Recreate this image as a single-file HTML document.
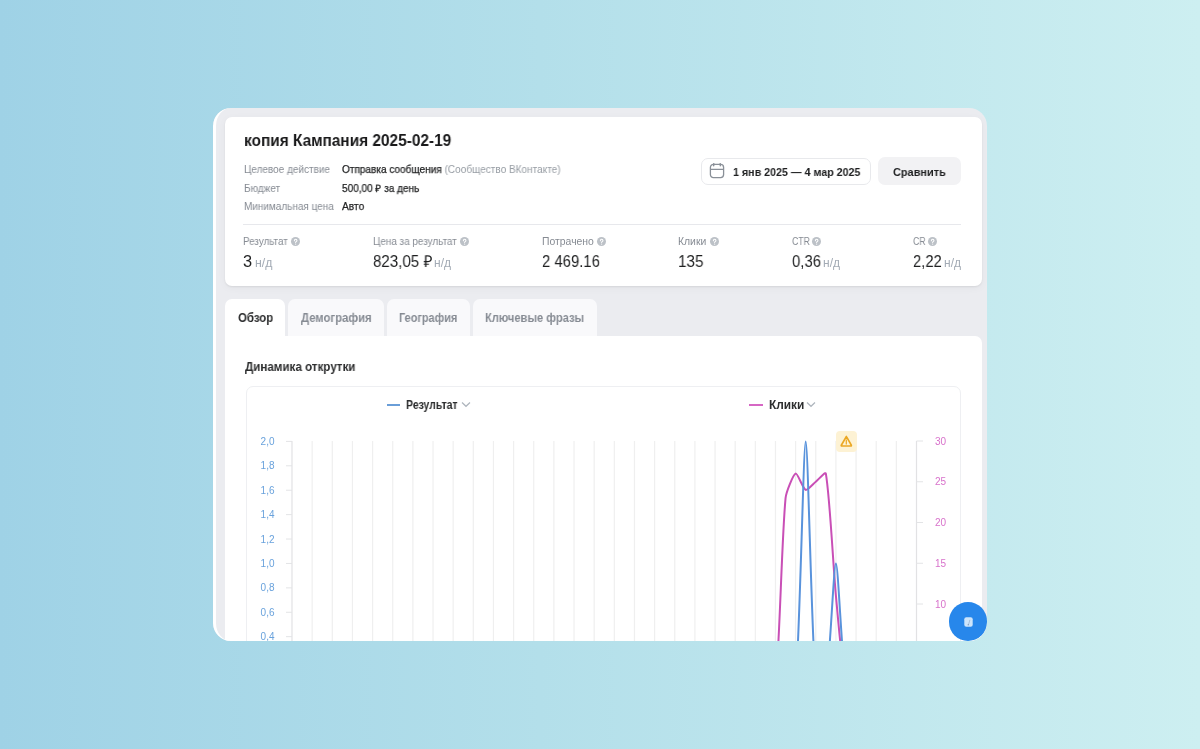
<!DOCTYPE html>
<html><head><meta charset="utf-8">
<style>
html,body{margin:0;padding:0;}
body{width:1200px;height:749px;overflow:hidden;position:relative;
  background:linear-gradient(90deg,#9fd2e6 0%,#b3dfea 45%,#cdeff1 100%);
  font-family:"Liberation Sans",sans-serif;color:#2c2d2e;}
.card{position:absolute;left:213px;top:107.5px;width:774px;height:533.5px;border-radius:18px;overflow:hidden;background:#ebecf0;}
.edge{position:absolute;left:0;top:0;width:774px;height:533.5px;border-radius:18px;box-sizing:border-box;border-left:3.5px solid #fff;}
.pg{position:absolute;left:-213px;top:-107.5px;width:1200px;height:749px;}
.abs{position:absolute;white-space:nowrap;}
.t{position:absolute;white-space:nowrap;transform-origin:0 0;will-change:transform;}
.head{position:absolute;left:225px;top:117px;width:757px;height:169px;background:#fff;border-radius:7px;box-shadow:0 1px 2px rgba(0,0,0,0.07),0 2px 8px rgba(0,0,0,0.04);}
.title{left:245px;top:129px;font-size:15.3px;font-weight:700;line-height:20px;color:#2c2d2e;}
.lbl{font-size:9.9px;line-height:12px;color:#818c99;}
.val{font-size:9.9px;line-height:12px;color:#2c2d2e;}
.muted{color:#99a2ad;}
.datebtn{position:absolute;left:701px;top:157.5px;width:170px;height:27.5px;box-sizing:border-box;border:1px solid #e8e9ec;border-radius:7px;}
.cmpbtn{position:absolute;left:878px;top:157px;width:83px;height:28px;background:#f2f2f4;border-radius:7px;}
.btntxt{font-size:10.7px;font-weight:700;line-height:14px;color:#2c2d2e;}
.divider{position:absolute;left:243px;top:224px;width:718px;height:1px;background:#e7e8ec;}
.mlbl{font-size:9.7px;line-height:12px;color:#818c99;}
.help{position:absolute;width:9px;height:9px;border-radius:50%;background:#bcc1c7;}
.help svg{position:absolute;left:0;top:0;}
.mval{font-size:15px;line-height:18px;color:#2c2d2e;}
.nd{font-size:11.3px;color:#a3abb5;}
.tab{position:absolute;top:298.5px;height:37.5px;border-radius:7px 7px 0 0;background:#f9f9fb;}
.tab.active{background:#fff;}
.tabtxt{font-size:11.2px;font-weight:700;line-height:14px;color:#818c99;}
.panel{position:absolute;left:225px;top:336px;width:757px;height:400px;background:#fff;border-radius:0 7px 0 0;}
.ctitle{left:245.5px;top:358px;font-size:11.5px;font-weight:700;line-height:16px;color:#2c2d2e;}
.cbox{position:absolute;left:245.5px;top:386px;width:715px;height:400px;box-sizing:border-box;border:1px solid #eeeff2;border-radius:7px;}
.chart{position:absolute;left:0;top:0;will-change:transform;}
.leg{font-size:10.6px;font-weight:700;line-height:14px;color:#2c2d2e;}
.warn{position:absolute;left:836px;top:431px;width:20.5px;height:21px;border-radius:4px;background:#fdf2d4;}
.fab{position:absolute;left:948.5px;top:602px;width:38.6px;height:38.6px;border-radius:50%;background:#2787eb;}
</style></head><body>
<div class="card">
<div class="pg">
  <div class="head"></div>

  <div class="datebtn"></div>
  <svg class="abs" style="left:709px;top:162px" width="16" height="17" viewBox="0 0 16 17">
    <rect x="1.4" y="2.4" width="13.2" height="13.2" rx="3" fill="none" stroke="#8a9098" stroke-width="1.3"/>
    <line x1="1.4" y1="7.3" x2="14.6" y2="7.3" stroke="#8a9098" stroke-width="1.3"/>
    <line x1="4.7" y1="1.6" x2="4.7" y2="3.8" stroke="#8a9098" stroke-width="1.4" stroke-linecap="round"/>
    <line x1="11.3" y1="1.6" x2="11.3" y2="3.8" stroke="#8a9098" stroke-width="1.4" stroke-linecap="round"/>
  </svg>
  <div class="cmpbtn"></div>

  <div class="divider"></div>

  <div class="help" style="left:290.95px;top:236.6px"><svg width="9.3" height="9.3" viewBox="0 0 10 10"><path d="M3.6,3.9 Q3.6,2.5 5,2.5 Q6.4,2.5 6.4,3.8 Q6.4,4.6 5.5,5 Q5,5.3 5,6" fill="none" stroke="#fff" stroke-width="1.1" stroke-linecap="round"/><circle cx="5" cy="7.6" r="0.65" fill="#fff"/></svg></div>
<div class="help" style="left:460.10px;top:236.6px"><svg width="9.3" height="9.3" viewBox="0 0 10 10"><path d="M3.6,3.9 Q3.6,2.5 5,2.5 Q6.4,2.5 6.4,3.8 Q6.4,4.6 5.5,5 Q5,5.3 5,6" fill="none" stroke="#fff" stroke-width="1.1" stroke-linecap="round"/><circle cx="5" cy="7.6" r="0.65" fill="#fff"/></svg></div>
<div class="help" style="left:597.10px;top:236.6px"><svg width="9.3" height="9.3" viewBox="0 0 10 10"><path d="M3.6,3.9 Q3.6,2.5 5,2.5 Q6.4,2.5 6.4,3.8 Q6.4,4.6 5.5,5 Q5,5.3 5,6" fill="none" stroke="#fff" stroke-width="1.1" stroke-linecap="round"/><circle cx="5" cy="7.6" r="0.65" fill="#fff"/></svg></div>
<div class="help" style="left:710.20px;top:236.6px"><svg width="9.3" height="9.3" viewBox="0 0 10 10"><path d="M3.6,3.9 Q3.6,2.5 5,2.5 Q6.4,2.5 6.4,3.8 Q6.4,4.6 5.5,5 Q5,5.3 5,6" fill="none" stroke="#fff" stroke-width="1.1" stroke-linecap="round"/><circle cx="5" cy="7.6" r="0.65" fill="#fff"/></svg></div>
<div class="help" style="left:812.45px;top:236.6px"><svg width="9.3" height="9.3" viewBox="0 0 10 10"><path d="M3.6,3.9 Q3.6,2.5 5,2.5 Q6.4,2.5 6.4,3.8 Q6.4,4.6 5.5,5 Q5,5.3 5,6" fill="none" stroke="#fff" stroke-width="1.1" stroke-linecap="round"/><circle cx="5" cy="7.6" r="0.65" fill="#fff"/></svg></div>
<div class="help" style="left:928.25px;top:236.6px"><svg width="9.3" height="9.3" viewBox="0 0 10 10"><path d="M3.6,3.9 Q3.6,2.5 5,2.5 Q6.4,2.5 6.4,3.8 Q6.4,4.6 5.5,5 Q5,5.3 5,6" fill="none" stroke="#fff" stroke-width="1.1" stroke-linecap="round"/><circle cx="5" cy="7.6" r="0.65" fill="#fff"/></svg></div>


  <div class="tab active" style="left:225px;width:59.5px"></div>
  <div class="tab" style="left:287.5px;width:96.5px"></div>
  <div class="tab" style="left:386.5px;width:83.5px"></div>
  <div class="tab" style="left:473px;width:124px"></div>
  <div class="panel"></div>
  <div class="cbox"></div>
  <svg class="chart" width="1200" height="749" viewBox="0 0 1200 749">
<g font-family="Liberation Sans" font-size="10"><line x1="292.00" y1="441" x2="292.00" y2="700" stroke="#e2e2e4" stroke-width="1.2"/><line x1="312.15" y1="441" x2="312.15" y2="700" stroke="#efefef" stroke-width="1.2"/><line x1="332.29" y1="441" x2="332.29" y2="700" stroke="#efefef" stroke-width="1.2"/><line x1="352.44" y1="441" x2="352.44" y2="700" stroke="#efefef" stroke-width="1.2"/><line x1="372.58" y1="441" x2="372.58" y2="700" stroke="#efefef" stroke-width="1.2"/><line x1="392.73" y1="441" x2="392.73" y2="700" stroke="#efefef" stroke-width="1.2"/><line x1="412.87" y1="441" x2="412.87" y2="700" stroke="#efefef" stroke-width="1.2"/><line x1="433.02" y1="441" x2="433.02" y2="700" stroke="#efefef" stroke-width="1.2"/><line x1="453.16" y1="441" x2="453.16" y2="700" stroke="#efefef" stroke-width="1.2"/><line x1="473.31" y1="441" x2="473.31" y2="700" stroke="#efefef" stroke-width="1.2"/><line x1="493.45" y1="441" x2="493.45" y2="700" stroke="#efefef" stroke-width="1.2"/><line x1="513.60" y1="441" x2="513.60" y2="700" stroke="#efefef" stroke-width="1.2"/><line x1="533.74" y1="441" x2="533.74" y2="700" stroke="#efefef" stroke-width="1.2"/><line x1="553.89" y1="441" x2="553.89" y2="700" stroke="#efefef" stroke-width="1.2"/><line x1="574.03" y1="441" x2="574.03" y2="700" stroke="#efefef" stroke-width="1.2"/><line x1="594.18" y1="441" x2="594.18" y2="700" stroke="#efefef" stroke-width="1.2"/><line x1="614.32" y1="441" x2="614.32" y2="700" stroke="#efefef" stroke-width="1.2"/><line x1="634.47" y1="441" x2="634.47" y2="700" stroke="#efefef" stroke-width="1.2"/><line x1="654.61" y1="441" x2="654.61" y2="700" stroke="#efefef" stroke-width="1.2"/><line x1="674.76" y1="441" x2="674.76" y2="700" stroke="#efefef" stroke-width="1.2"/><line x1="694.90" y1="441" x2="694.90" y2="700" stroke="#efefef" stroke-width="1.2"/><line x1="715.05" y1="441" x2="715.05" y2="700" stroke="#efefef" stroke-width="1.2"/><line x1="735.19" y1="441" x2="735.19" y2="700" stroke="#efefef" stroke-width="1.2"/><line x1="755.34" y1="441" x2="755.34" y2="700" stroke="#efefef" stroke-width="1.2"/><line x1="775.48" y1="441" x2="775.48" y2="700" stroke="#efefef" stroke-width="1.2"/><line x1="795.63" y1="441" x2="795.63" y2="700" stroke="#efefef" stroke-width="1.2"/><line x1="815.77" y1="441" x2="815.77" y2="700" stroke="#efefef" stroke-width="1.2"/><line x1="835.92" y1="441" x2="835.92" y2="700" stroke="#efefef" stroke-width="1.2"/><line x1="856.06" y1="441" x2="856.06" y2="700" stroke="#efefef" stroke-width="1.2"/><line x1="876.21" y1="441" x2="876.21" y2="700" stroke="#efefef" stroke-width="1.2"/><line x1="896.35" y1="441" x2="896.35" y2="700" stroke="#efefef" stroke-width="1.2"/><line x1="916.50" y1="441" x2="916.50" y2="700" stroke="#e2e2e4" stroke-width="1.2"/><line x1="286" y1="441.40" x2="292" y2="441.40" stroke="#e3e4e6" stroke-width="1"/><text x="274.5" y="445.00" text-anchor="end" fill="#69a2dc">2,0</text><line x1="286" y1="465.81" x2="292" y2="465.81" stroke="#e3e4e6" stroke-width="1"/><text x="274.5" y="469.41" text-anchor="end" fill="#69a2dc">1,8</text><line x1="286" y1="490.22" x2="292" y2="490.22" stroke="#e3e4e6" stroke-width="1"/><text x="274.5" y="493.82" text-anchor="end" fill="#69a2dc">1,6</text><line x1="286" y1="514.63" x2="292" y2="514.63" stroke="#e3e4e6" stroke-width="1"/><text x="274.5" y="518.23" text-anchor="end" fill="#69a2dc">1,4</text><line x1="286" y1="539.04" x2="292" y2="539.04" stroke="#e3e4e6" stroke-width="1"/><text x="274.5" y="542.64" text-anchor="end" fill="#69a2dc">1,2</text><line x1="286" y1="563.45" x2="292" y2="563.45" stroke="#e3e4e6" stroke-width="1"/><text x="274.5" y="567.05" text-anchor="end" fill="#69a2dc">1,0</text><line x1="286" y1="587.86" x2="292" y2="587.86" stroke="#e3e4e6" stroke-width="1"/><text x="274.5" y="591.46" text-anchor="end" fill="#69a2dc">0,8</text><line x1="286" y1="612.27" x2="292" y2="612.27" stroke="#e3e4e6" stroke-width="1"/><text x="274.5" y="615.87" text-anchor="end" fill="#69a2dc">0,6</text><line x1="286" y1="636.68" x2="292" y2="636.68" stroke="#e3e4e6" stroke-width="1"/><text x="274.5" y="640.28" text-anchor="end" fill="#69a2dc">0,4</text><line x1="916.5" y1="441.00" x2="923" y2="441.00" stroke="#e3e4e6" stroke-width="1"/><text x="935" y="444.60" fill="#d872cb">30</text><line x1="916.5" y1="481.75" x2="923" y2="481.75" stroke="#e3e4e6" stroke-width="1"/><text x="935" y="485.35" fill="#d872cb">25</text><line x1="916.5" y1="522.50" x2="923" y2="522.50" stroke="#e3e4e6" stroke-width="1"/><text x="935" y="526.10" fill="#d872cb">20</text><line x1="916.5" y1="563.25" x2="923" y2="563.25" stroke="#e3e4e6" stroke-width="1"/><text x="935" y="566.85" fill="#d872cb">15</text><line x1="916.5" y1="604.00" x2="923" y2="604.00" stroke="#e3e4e6" stroke-width="1"/><text x="935" y="607.60" fill="#d872cb">10</text></g>
<path d="M735.19,685.50C737.41,685.50 743.05,685.50 745.27,685.50C747.48,685.50 753.12,685.50 755.34,685.50C757.55,685.50 763.20,685.50 765.41,685.50C767.63,685.50 775.26,685.50 775.48,685.50C779.69,646.36 781.67,538.91 785.56,498.05C786.10,492.29 793.06,474.64 795.63,473.60C797.49,472.85 803.06,488.83 805.70,489.90C807.49,490.62 813.56,483.54 815.77,481.75C817.99,479.96 825.42,471.20 825.85,473.60C829.86,496.30 833.37,568.99 835.92,595.85C837.80,615.61 842.01,667.76 845.99,685.50C846.44,685.50 853.85,685.50 856.06,685.50C858.28,685.50 863.92,685.50 866.14,685.50C868.35,685.50 873.99,685.50 876.21,685.50C878.43,685.50 884.07,685.50 886.28,685.50C888.50,685.50 894.14,685.50 896.35,685.50" fill="none" stroke="#c94fb6" stroke-width="2.0" stroke-linejoin="round"/>
<path d="M735.19,685.50C737.41,685.50 743.05,685.50 745.27,685.50C747.48,685.50 753.12,685.50 755.34,685.50C757.55,685.50 763.20,685.50 765.41,685.50C767.63,685.50 773.27,685.50 775.48,685.50C777.70,685.50 783.34,685.50 785.56,685.50C787.77,685.50 795.45,685.50 795.63,685.50C799.89,633.92 803.49,441.40 805.70,441.40C807.92,441.40 811.52,633.92 815.77,685.50C815.95,685.50 825.51,685.50 825.85,685.50C829.94,660.69 833.70,563.45 835.92,563.45C838.14,563.45 841.90,660.69 845.99,685.50C846.33,685.50 853.85,685.50 856.06,685.50C858.28,685.50 863.92,685.50 866.14,685.50C868.35,685.50 873.99,685.50 876.21,685.50C878.43,685.50 884.07,685.50 886.28,685.50C888.50,685.50 894.14,685.50 896.35,685.50" fill="none" stroke="#5993dc" stroke-width="2.0" stroke-linejoin="round"/>
</svg>
  <div class="t" style="left:244.30px;top:130.00px;font-size:16.3px;font-weight:700;line-height:20px;transform:scaleX(0.9460);color:#19191a">копия Кампания 2025-02-19</div>
<div class="t" style="left:243.97px;top:164.00px;font-size:10.3px;font-weight:400;line-height:12px;transform:scaleX(0.9691);color:#868b93">Целевое действие</div>
<div class="t" style="left:243.97px;top:183.00px;font-size:10.3px;font-weight:400;line-height:12px;transform:scaleX(0.9691);color:#868b93">Бюджет</div>
<div class="t" style="left:243.97px;top:201.00px;font-size:10.3px;font-weight:400;line-height:12px;transform:scaleX(0.9691);color:#868b93">Минимальная цена</div>
<div class="t" style="left:342.01px;top:164.00px;font-size:10.3px;font-weight:400;line-height:12px;transform:scaleX(0.9751);color:#232425;-webkit-text-stroke:0.25px #232425">Отправка сообщения <span style='color:#969ca3;-webkit-text-stroke:0'>(Сообщество ВКонтакте)</span></div>
<div class="t" style="left:342.01px;top:183.00px;font-size:10.3px;font-weight:400;line-height:12px;transform:scaleX(0.9751);color:#232425;-webkit-text-stroke:0.25px #232425">500,00 ₽ за день</div>
<div class="t" style="left:342.20px;top:201.00px;font-size:10.3px;font-weight:400;line-height:12px;transform:scaleX(0.9909);color:#232425;-webkit-text-stroke:0.25px #232425">Авто</div>
<div class="t" style="left:732.61px;top:165.00px;font-size:11.7px;font-weight:700;line-height:14px;transform:scaleX(0.9148);color:#1e1f20">1 янв 2025 — 4 мар 2025</div>
<div class="t" style="left:893.27px;top:165.00px;font-size:11.5px;font-weight:700;line-height:14px;transform:scaleX(0.9507);color:#1e1f20">Сравнить</div>
<div class="t" style="left:237.53px;top:311.00px;font-size:12.3px;font-weight:700;line-height:14px;transform:scaleX(0.9324);color:#2c2d2e">Обзор</div>
<div class="t" style="left:301.00px;top:311.00px;font-size:12.3px;font-weight:700;line-height:14px;transform:scaleX(0.9180);color:#868b93">Демография</div>
<div class="t" style="left:399.33px;top:311.00px;font-size:12.3px;font-weight:700;line-height:14px;transform:scaleX(0.8872);color:#868b93">География</div>
<div class="t" style="left:485.32px;top:311.00px;font-size:12.3px;font-weight:700;line-height:14px;transform:scaleX(0.9037);color:#868b93">Ключевые фразы</div>
<div class="t" style="left:245.40px;top:359.00px;font-size:12.3px;font-weight:700;line-height:16px;transform:scaleX(0.9428);color:#2c2d2e">Динамика открутки</div>
<div class="t" style="left:406.04px;top:398.00px;font-size:11.9px;font-weight:700;line-height:14px;transform:scaleX(0.8835);color:#2c2d2e">Результат</div>
<div class="t" style="left:768.66px;top:398.00px;font-size:11.9px;font-weight:700;line-height:14px;transform:scaleX(0.9912);color:#2c2d2e">Клики</div>
<div class="t" style="left:242.89px;top:236.00px;font-size:10.4px;font-weight:400;line-height:12px;transform:scaleX(0.9462);color:#868b93">Результат</div>
<div class="t" style="left:243.12px;top:252.00px;font-size:16.4px;font-weight:400;line-height:18px;transform:scaleX(0.9500);color:#1f2021">3</div>
<div class="t" style="left:254.53px;top:256.00px;font-size:12px;font-weight:400;line-height:14px;transform:scaleX(1.0250);color:#a3abb5">н/д</div>
<div class="t" style="left:372.78px;top:236.00px;font-size:10.4px;font-weight:400;line-height:12px;transform:scaleX(0.9540);color:#868b93">Цена за результат</div>
<div class="t" style="left:372.81px;top:252.00px;font-size:16.4px;font-weight:400;line-height:18px;transform:scaleX(0.9206);color:#1f2021">823,05 ₽</div>
<div class="t" style="left:434.25px;top:256.00px;font-size:12px;font-weight:400;line-height:14px;transform:scaleX(1.0000);color:#a3abb5">н/д</div>
<div class="t" style="left:541.75px;top:236.00px;font-size:10.4px;font-weight:400;line-height:12px;transform:scaleX(1.0010);color:#868b93">Потрачено</div>
<div class="t" style="left:541.82px;top:252.00px;font-size:16.4px;font-weight:400;line-height:18px;transform:scaleX(0.9072);color:#1f2021">2 469.16</div>
<div class="t" style="left:678.46px;top:236.00px;font-size:10.4px;font-weight:400;line-height:12px;transform:scaleX(0.9852);color:#868b93">Клики</div>
<div class="t" style="left:678.03px;top:252.00px;font-size:16.4px;font-weight:400;line-height:18px;transform:scaleX(0.9333);color:#1f2021">135</div>
<div class="t" style="left:791.58px;top:236.00px;font-size:10.4px;font-weight:400;line-height:12px;transform:scaleX(0.8390);color:#868b93">CTR</div>
<div class="t" style="left:791.54px;top:252.00px;font-size:16.4px;font-weight:400;line-height:18px;transform:scaleX(0.9106);color:#1f2021">0,36</div>
<div class="t" style="left:823.46px;top:256.00px;font-size:12px;font-weight:400;line-height:14px;transform:scaleX(0.9875);color:#a3abb5">н/д</div>
<div class="t" style="left:912.88px;top:236.00px;font-size:10.4px;font-weight:400;line-height:12px;transform:scaleX(0.8357);color:#868b93">CR</div>
<div class="t" style="left:912.62px;top:252.00px;font-size:16.4px;font-weight:400;line-height:18px;transform:scaleX(0.9016);color:#1f2021">2,22</div>
<div class="t" style="left:944.26px;top:256.00px;font-size:12px;font-weight:400;line-height:14px;transform:scaleX(0.9875);color:#a3abb5">н/д</div>
  <div class="abs" style="left:387px;top:404.3px;width:13px;height:1.6px;background:#6a9ed8"></div>
  <svg class="abs" style="left:461px;top:401px" width="10" height="7" viewBox="0 0 10 7"><polyline points="1,1.5 5,5.3 9,1.5" fill="none" stroke="#aeb5bd" stroke-width="1.2"/></svg>
  <div class="abs" style="left:749px;top:404.3px;width:13.5px;height:1.6px;background:#d667c4"></div>
  <svg class="abs" style="left:806px;top:401px" width="10" height="7" viewBox="0 0 10 7"><polyline points="1,1.5 5,5.3 9,1.5" fill="none" stroke="#aeb5bd" stroke-width="1.2"/></svg>

  <div class="warn"></div>
  <svg class="abs" style="left:836px;top:431px" width="21" height="21" viewBox="0 0 21 21">
    <path d="M10.3,5.6 Q10.3,5.3 10.6,5.9 L15.3,14.2 Q15.6,15 14.8,15 L5.8,15 Q5,15 5.3,14.2 Z" fill="none" stroke="#eba723" stroke-width="1.7" stroke-linejoin="round"/>
    <line x1="10.3" y1="8.6" x2="10.3" y2="13.6" stroke="#eba723" stroke-width="1.2"/>
  </svg>

  <div class="fab"></div>
  <svg class="abs" style="left:963.5px;top:617px" width="9" height="10" viewBox="0 0 9 10"><rect x="0.3" y="0.3" width="8.4" height="9.4" rx="2" fill="#cde5fb"/><path d="M5.8,3.2 L4.6,7.4" stroke="#a3bad6" stroke-width="0.9" stroke-linecap="round"/><circle cx="4.3" cy="7.8" r="0.75" fill="#869fbf"/></svg>
</div>
<div class="edge"></div>
</div>
</body></html>
